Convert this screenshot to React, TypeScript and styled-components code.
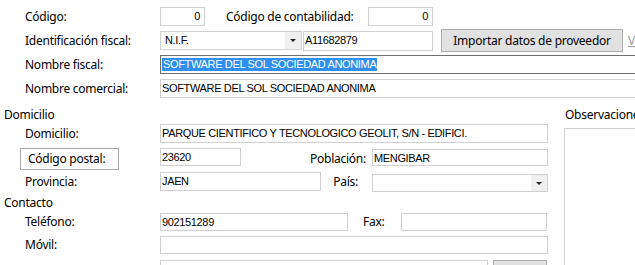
import React from "react";
import styled, { createGlobalStyle } from "styled-components";

const GlobalStyle = createGlobalStyle`
  html, body { margin: 0; padding: 0; background: #fff; overflow: hidden; }
  body {
    font-family: "Segoe UI", "Noto Sans", "Open Sans", sans-serif;
    font-size: 12px;
    letter-spacing: -0.25px;
    color: #000;
  }
  * { box-sizing: border-box; }
`;

const Form = styled.div`
  width: 635px;
  height: 265px;
  overflow: hidden;
  display: flex;
  flex-direction: column;
`;

const Row = styled.div<{ $top: number; $h: number; $align?: string }>`
  display: flex;
  align-items: ${(p) => p.$align || "center"};
  height: ${(p) => p.$h}px;
  margin-top: ${(p) => p.$top}px;
  flex-shrink: 0;
  white-space: nowrap;
`;

const Label = styled.div<{ $w?: number; $pl?: number; $pr?: number; $right?: boolean; $h?: number }>`
  width: ${(p) => p.$w ?? 160}px;
  padding-left: ${(p) => p.$pl ?? 25}px;
  padding-right: ${(p) => p.$pr ?? 0}px;
  text-align: ${(p) => (p.$right ? "right" : "left")};
  flex-shrink: 0;
  line-height: ${(p) => p.$h ?? 16}px;
  height: ${(p) => p.$h ?? 16}px;
  align-self: center;
`;

const BoxedLabelCell = styled.div`
  width: 160px;
  padding-left: 20px;
  flex-shrink: 0;
`;

const BoxedLabel = styled.div`
  width: 99px;
  height: 22px;
  border: 1px solid #a9a9a9;
  padding-left: 7px;
  line-height: 20px;
`;

const TextBox = styled.div<{ $w: number; $h: number; $right?: boolean; $focus?: boolean; $mt?: number; $ml?: number }>`
  width: ${(p) => p.$w}px;
  height: ${(p) => p.$h}px;
  margin-top: ${(p) => p.$mt ?? 0}px;
  margin-left: ${(p) => p.$ml ?? 0}px;
  flex-shrink: 0;
  border: 1px solid ${(p) => (p.$focus ? "#6e6e6e" : "#d0d0d0")};
  background: #fff;
  padding: 2px ${(p) => (p.$right ? 4 : 1)}px 0 ${(p) => (p.$right ? 0 : 1)}px;
  text-align: ${(p) => (p.$right ? "right" : "left")};
  font-family: "Liberation Sans", Arial, sans-serif;
  font-size: 11px;
  line-height: 13px;
  letter-spacing: -0.35px;
  overflow: hidden;
`;

const Selected = styled.span`
  background: #2f8ff0;
  color: #fff;
  display: inline-block;
  padding: 0 1px;
`;

const Combo = styled.div<{ $w: number; $h: number; $mt?: number }>`
  width: ${(p) => p.$w}px;
  height: ${(p) => p.$h}px;
  margin-top: ${(p) => p.$mt ?? 0}px;
  flex-shrink: 0;
  border: 1px solid #d0d0d0;
  display: flex;
  font-family: "Liberation Sans", Arial, sans-serif;
  font-size: 11px;
  letter-spacing: -0.35px;
`;

const ComboText = styled.div`
  flex: 1;
  padding: 2px 0 0 4px;
  line-height: 13px;
`;

const DropButton = styled.div`
  width: 16px;
  background: #f0f0f0;
  display: flex;
  align-items: center;
  justify-content: center;
`;

const Arrow = styled.div`
  width: 0;
  height: 0;
  border-left: 3px solid transparent;
  border-right: 3px solid transparent;
  border-top: 3px solid #222;
`;

const Button = styled.div<{ $w: number; $ml: number }>`
  width: ${(p) => p.$w}px;
  height: 23px;
  margin-left: ${(p) => p.$ml}px;
  flex-shrink: 0;
  background: #e1e1e1;
  border: 1px solid #adadad;
  display: flex;
  align-items: center;
  justify-content: center;
  line-height: 16px;
`;

const Link = styled.div`
  margin-left: 5px;
  color: #9a9a9a;
  text-decoration: underline;
`;

const Lower = styled.div`
  display: grid;
  grid-template-columns: 548px 1fr;
  column-gap: 16px;
  margin-top: 1px;
`;

const Column = styled.div`
  display: flex;
  flex-direction: column;
`;

const Heading = styled.div<{ $top: number; $pl: number }>`
  margin-top: ${(p) => p.$top}px;
  height: 18px;
  line-height: 18px;
  padding-left: ${(p) => p.$pl}px;
  white-space: nowrap;
`;

const NotesBox = styled.div`
  margin-top: 4px;
  height: 200px;
  border: 1px solid #d0d0d0;
  width: 120px;
`;

export default function App() {
  return (
    <>
      <GlobalStyle />
      <Form>
        <Row $top={7} $h={19}>
          <Label>Código:</Label>
          <TextBox $w={45} $h={19} $right>0</TextBox>
          <Label $w={163} $pl={21}>Código de contabilidad:</Label>
          <TextBox $w={65} $h={19} $right>0</TextBox>
        </Row>
        <Row $top={3} $h={23}>
          <Label>Identificación fiscal:</Label>
          <Combo $w={142} $h={19}>
            <ComboText>N.I.F.</ComboText>
            <DropButton><Arrow /></DropButton>
          </Combo>
          <TextBox $w={130} $h={20} $ml={1}>A11682879</TextBox>
          <Button $w={182} $ml={8}>Importar datos de proveedor</Button>
          <Link>Ver</Link>
        </Row>
        <Row $top={3} $h={19}>
          <Label>Nombre fiscal:</Label>
          <TextBox $w={490} $h={19} $focus>
            <Selected>SOFTWARE DEL SOL SOCIEDAD ANONIMA</Selected>
          </TextBox>
        </Row>
        <Row $top={5} $h={19}>
          <Label>Nombre comercial:</Label>
          <TextBox $w={490} $h={19}>SOFTWARE DEL SOL SOCIEDAD ANONIMA</TextBox>
        </Row>
        <Lower>
          <Column>
            <Heading $top={7} $pl={4}>Domicilio</Heading>
            <Row $top={0} $h={19}>
              <Label>Domicilio:</Label>
              <TextBox $w={388} $h={19}>PARQUE CIENTIFICO Y TECNOLOGICO GEOLIT, S/N - EDIFICI.</TextBox>
            </Row>
            <Row $top={5} $h={22} $align="flex-start">
              <BoxedLabelCell>
                <BoxedLabel>Código postal:</BoxedLabel>
              </BoxedLabelCell>
              <TextBox $w={81} $h={18}>23620</TextBox>
              <Label $w={131} $pl={0} $pr={6} $right>Población:</Label>
              <TextBox $w={176} $h={17} $mt={1}>MENGIBAR</TextBox>
            </Row>
            <Row $top={2} $h={20} $align="flex-start">
              <Label>Provincia:</Label>
              <TextBox $w={161} $h={19}>JAEN</TextBox>
              <Label $w={51} $pl={0} $pr={14} $right>País:</Label>
              <Combo $w={176} $h={18} $mt={2}>
                <ComboText />
                <DropButton><Arrow /></DropButton>
              </Combo>
            </Row>
            <Heading $top={2} $pl={4}>Contacto</Heading>
            <Row $top={1} $h={18}>
              <Label>Teléfono:</Label>
              <TextBox $w={188} $h={18}>902151289</TextBox>
              <Label $w={53} $pl={15}>Fax:</Label>
              <TextBox $w={146} $h={18} />
            </Row>
            <Row $top={5} $h={18}>
              <Label>Móvil:</Label>
              <TextBox $w={388} $h={18} />
            </Row>
            <Row $top={6} $h={23} $align="flex-start">
              <Label $h={16}>&nbsp;</Label>
              <TextBox $w={328} $h={20} />
              <Button $w={54} $ml={5}>Más...</Button>
            </Row>
          </Column>
          <Column>
            <Heading $top={7} $pl={1}>Observaciones</Heading>
            <NotesBox />
          </Column>
        </Lower>
      </Form>
    </>
  );
}
